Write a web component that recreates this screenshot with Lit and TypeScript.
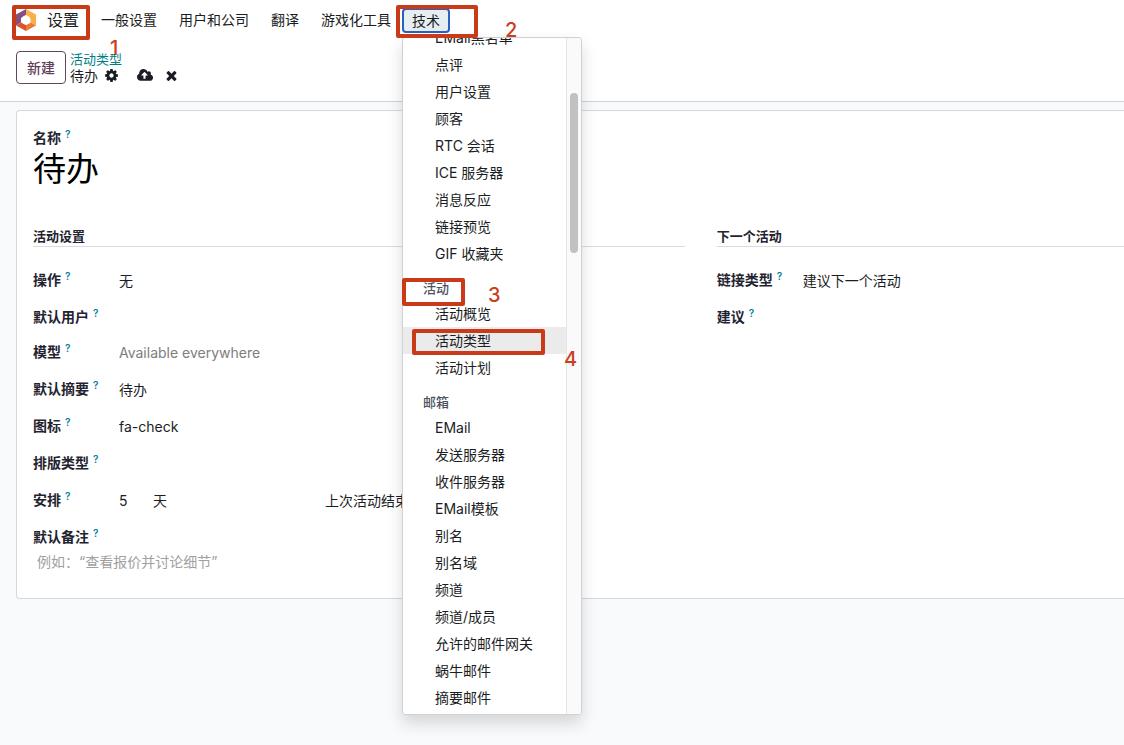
import { LitElement, html, css, svg, nothing } from "lit";
import { customElement, property } from "lit/decorators.js";

const NAV = ["一般设置", "用户和公司", "翻译", "游戏化工具"];

interface MenuGroup {
  title?: string;
  items: string[];
}

const MENU: MenuGroup[] = [
  {
    items: ["EMail黑名单", "点评", "用户设置", "顾客", "RTC 会话", "ICE 服务器", "消息反应", "链接预览", "GIF 收藏夹"],
  },
  { title: "活动", items: ["活动概览", "活动类型", "活动计划"] },
  {
    title: "邮箱",
    items: [
      "EMail", "发送服务器", "收件服务器", "EMail模板", "别名", "别名域", "频道",
      "频道/成员", "允许的邮件网关", "蜗牛邮件", "摘要邮件",
    ],
  },
];

const ICONS = {
  cog: {
    box: "0 0 1792 1792",
    d: "M1152 896q0-106-75-181t-181-75-181 75-75 181 75 181 181 75 181-75 75-181zm512-109v222q0 12-8 23t-20 13l-185 28q-19 54-39 91 35 50 107 138 10 12 10 25t-9 23q-27 37-99 108t-94 71q-12 0-26-9l-138-108q-44 23-91 38-16 136-29 186-7 28-36 28h-222q-14 0-24.5-8.5t-11.5-21.5l-28-184q-49-16-90-37l-141 107q-10 9-25 9-14 0-25-11-126-114-165-168-7-10-7-23 0-12 8-23 15-21 51-66.5t54-70.5q-27-50-41-99l-183-27q-13-2-21-12.5t-8-23.5v-222q0-12 8-23t19-13l186-28q14-46 39-92-40-57-107-138-10-12-10-24 0-10 9-23 26-36 98.5-107.5t94.5-71.5q13 0 26 10l138 107q44-23 91-38 16-136 29-186 7-28 36-28h222q14 0 24.5 8.5t11.5 21.5l28 184q49 16 90 37l142-107q9-9 24-9 13 0 25 10 129 119 165 170 7 8 7 22 0 12-8 23-15 21-51 66.5t-54 70.5q26 50 41 98l183 28q13 2 21 12.5t8 23.5z",
  },
  cloud: {
    box: "-64 0 1920 1792",
    d: "M1216 864q0-14-9-23l-352-352q-9-9-23-9t-23 9l-351 351q-10 12-10 24 0 14 9 23t23 9h224v352q0 13 9.5 22.5t22.5 9.5h192q13 0 22.5-9.5t9.5-22.5v-352h224q13 0 22.5-9.5t9.5-22.5zm640 288q0 159-112.5 271.5t-271.5 112.5h-1088q-185 0-316.5-131.5t-131.5-316.5q0-130 70-240t188-165q-2-30-2-43 0-212 150-362t362-150q156 0 285.5 87t188.5 231q71-62 166-62 106 0 181 75t75 181q0 76-41 138 130 31 213.5 135.5t83.5 238.5z",
  },
  times: {
    box: "0 0 1792 1792",
    d: "M1490 1322q0 40-28 68l-136 136q-28 28-68 28t-68-28l-294-294-294 294q-28 28-68 28t-68-28l-136-136q-28-28-28-68t28-68l294-294-294-294q-28-28-28-68t28-68l136-136q28-28 68-28t68 28l294 294 294-294q28-28 68-28t68 28l136 136q28 28 28 68t-28 68l-294 294 294 294q28 28 28 68z",
  },
};

const icon = (name: keyof typeof ICONS) => html`
  <svg class="icon" viewBox=${ICONS[name].box} aria-hidden="true">
    ${svg`<path d=${ICONS[name].d} fill="currentColor" />`}
  </svg>
`;

const base = css`
  *,
  *::before,
  *::after {
    box-sizing: border-box;
  }
  button,
  input,
  select,
  textarea {
    font: inherit;
    color: inherit;
    margin: 0;
    padding: 0;
    border: 0;
    border-radius: 0;
    background: none;
    appearance: none;
    outline: none;
  }
  a {
    color: inherit;
    text-decoration: none;
  }
`;

@customElement("apps-menu")
class AppsMenu extends LitElement {
  @property() current = "";

  static styles = [
    base,
    css`
      :host {
        display: flex;
        width: 180px;
        height: 678px;
        border: 1px solid #cfd2d5;
        border-radius: 3px;
        background: #fff;
        box-shadow: 0 8px 16px rgba(0, 0, 0, 0.15);
        overflow: hidden;
      }
      .list {
        flex: 1;
        display: flex;
        flex-direction: column;
        justify-content: flex-end;
        padding-bottom: 3px;
      }
      .title {
        flex: none;
        padding: 9px 20px 0;
        height: 33px;
        line-height: 24px;
        font-size: 13px;
        font-weight: 500;
        color: #4b5260;
      }
      .item {
        flex: none;
        padding: 0 32px;
        line-height: 27px;
        white-space: nowrap;
      }
      .current {
        background: #ebebeb;
      }
      .track {
        width: 15px;
        padding: 55px 3px 0;
        border-left: 1px solid #e6e6e6;
        background: #fafafa;
      }
      .thumb {
        height: 160px;
        border-radius: 4px;
        background: #c1c1c1;
      }
    `,
  ];

  render() {
    return html`
      <nav class="list" aria-label="技术">
        ${MENU.map(
          (g) => html`
            ${g.title ? html`<div class="title">${g.title}</div>` : nothing}
            ${g.items.map((i) => html`<a href="#" class="item ${i === this.current ? "current" : ""}">${i}</a>`)}
          `
        )}
      </nav>
      <div class="track"><div class="thumb"></div></div>
    `;
  }
}

@customElement("activity-form")
class ActivityForm extends LitElement {
  static styles = [
    base,
    css`
      :host {
        display: block;
      }
      .sheet {
        border: 1px solid #d5d9dc;
        border-right: 0;
        border-radius: 4px 0 0 4px;
        background: #fff;
        padding: 16px 0 25px 16px;
      }
      label {
        display: block;
        line-height: 21px;
        font-weight: 600;
        color: #1f2430;
        white-space: nowrap;
      }
      .help {
        margin-left: 4px;
        font-size: 10px;
        line-height: 10px;
        vertical-align: 5px;
        color: #017e9c;
      }
      .name {
        display: block;
        width: 100%;
        height: 42px;
        font-size: 33px;
        line-height: 42px;
        color: #000;
      }
      .groups {
        display: grid;
        grid-template-columns: 8fr 5fr;
        gap: 32px;
        margin-top: 36px;
      }
      h2 {
        margin: 0 0 14px;
        height: 21px;
        border-bottom: 1px solid #d9dcdf;
        font-size: 13px;
        line-height: 21px;
        font-weight: 600;
        color: #1f2430;
      }
      .row {
        display: grid;
        grid-template-columns: 86px 1fr;
        align-items: start;
        min-height: 37px;
        padding-top: 8px;
      }
      .compact {
        min-height: 35px;
      }
      .last {
        min-height: 32px;
      }
      .value {
        display: block;
        width: 100%;
        height: 23px;
        line-height: 23px;
      }
      .value::placeholder {
        color: #7d7d7d;
        opacity: 1;
      }
      .delay {
        display: grid;
        grid-template-columns: 34px 172px 1fr;
      }
      .note {
        display: block;
        width: 100%;
        height: 23px;
        padding-left: 4px;
        line-height: 23px;
        resize: none;
        overflow: hidden;
      }
      .note::placeholder {
        color: #a0a0a0;
        opacity: 1;
      }
    `,
  ];

  private label(id: string, text: string) {
    return html`<label for=${id}>${text}<sup class="help">?</sup></label>`;
  }

  render() {
    return html`
      <form class="sheet">
        ${this.label("name", "名称")}
        <input id="name" class="name" value="待办" />
        <div class="groups">
          <section>
            <h2>活动设置</h2>
            <div class="row">
              ${this.label("action", "操作")}
              <select id="action" class="value"><option>无</option></select>
            </div>
            <div class="row compact">${this.label("user", "默认用户")}<input id="user" class="value" /></div>
            <div class="row">
              ${this.label("model", "模型")}
              <input id="model" class="value" placeholder="Available everywhere" />
            </div>
            <div class="row">${this.label("summary", "默认摘要")}<input id="summary" class="value" value="待办" /></div>
            <div class="row">${this.label("icon", "图标")}<input id="icon" class="value" value="fa-check" /></div>
            <div class="row">${this.label("decoration", "排版类型")}<input id="decoration" class="value" /></div>
            <div class="row">
              ${this.label("delay", "安排")}
              <div class="delay">
                <input id="delay" class="value" value="5" />
                <select class="value" aria-label="单位"><option>天</option></select>
                <select class="value" aria-label="起点"><option>上次活动结束日期后</option></select>
              </div>
            </div>
            <div class="row last">${this.label("note", "默认备注")}</div>
            <textarea id="note" class="note" rows="1" placeholder="例如：“查看报价并讨论细节”"></textarea>
          </section>
          <section>
            <h2>下一个活动</h2>
            <div class="row">
              ${this.label("chaining", "链接类型")}
              <select id="chaining" class="value"><option>建议下一个活动</option></select>
            </div>
            <div class="row">${this.label("suggest", "建议")}<input id="suggest" class="value" /></div>
          </section>
        </div>
      </form>
    `;
  }
}

@customElement("app-root")
class AppRoot extends LitElement {
  static styles = [
    base,
    css`
      :host {
        display: block;
        position: relative;
        min-height: 100vh;
        background: #f8fafc;
        color: #1a1d24;
        font-family: Inter, "Noto Sans CJK SC", sans-serif;
        font-size: 14px;
        overflow: hidden;
      }
      .top {
        background: #fff;
        border-bottom: 1px solid #cfd4d9;
      }
      .navbar {
        display: flex;
        align-items: center;
        height: 40px;
        padding-left: 15px;
        white-space: nowrap;
      }
      .brand {
        display: flex;
        align-items: center;
        gap: 10px;
        margin-right: 11px;
        font-size: 16px;
        line-height: 24px;
      }
      .logo {
        width: 22px;
        height: 22px;
      }
      .entry {
        padding: 0 11px;
        line-height: 24px;
      }
      .holder {
        position: relative;
      }
      .open {
        display: block;
        height: 25px;
        padding: 0 8px;
        border: 2px solid #2a60c4;
        border-radius: 4px;
        background: #e6eef1;
        line-height: 21px;
      }
      .menu {
        position: absolute;
        top: 29px;
        left: 0;
        z-index: 2;
      }
      .panel {
        display: flex;
        align-items: center;
        gap: 4px;
        height: 61px;
        padding: 0 16px 7px;
      }
      .new {
        height: 33px;
        padding: 0 10px;
        border: 1px solid #5c4a5c;
        border-radius: 4px;
        font-weight: 500;
        color: #5f4058;
      }
      .crumbs {
        padding-top: 1px;
      }
      .parent {
        display: block;
        font-size: 13px;
        line-height: 16px;
        color: #017e84;
      }
      .here {
        display: flex;
        align-items: center;
        line-height: 18px;
      }
      .tool {
        display: flex;
        margin-left: 6px;
      }
      .save {
        margin-left: 18px;
      }
      .drop {
        margin-left: 11px;
      }
      .icon {
        height: 15px;
      }
      .content {
        padding: 8px 0 0 16px;
      }
      .mark {
        position: absolute;
        z-index: 3;
        border: 4px solid #c93a18;
        border-radius: 2px;
        pointer-events: none;
      }
      .num {
        position: absolute;
        z-index: 3;
        font-size: 20px;
        line-height: 24px;
        font-weight: 500;
        color: #cc3f1e;
      }
      .m1 { left: 12px; top: 5px; width: 78px; height: 35px; }
      .m2 { left: 396px; top: 5px; width: 82px; height: 33px; }
      .m3 { left: 402px; top: 278px; width: 63px; height: 28px; }
      .m4 { left: 412px; top: 329px; width: 133px; height: 26px; }
      .n1 { left: 110px; top: 36px; }
      .n2 { left: 505px; top: 18px; }
      .n3 { left: 488px; top: 283px; }
      .n4 { left: 564px; top: 347px; }
    `,
  ];

  render() {
    return html`
      <header class="top">
        <nav class="navbar">
          <a href="#" class="brand">
            <svg class="logo" viewBox="0 0 22 22" aria-hidden="true">
              <path d="M11 0L1 5.500V16.500L6 13.500V9L11 6Z" fill="#87507f" />
              <path d="M11 0L21 5.500V16.500L16 13.500L11 6Z" fill="#f9b04a" />
              <path d="M1 16.500L6 13.500L11 16L11 22Z" fill="#d9532c" />
              <path d="M11 22L21 16.500L16 13.500L11 16Z" fill="#ee7a35" />
              <circle cx="11" cy="11" r="4.500" fill="#fff" />
            </svg>
            设置
          </a>
          ${NAV.map((t) => html`<a href="#" class="entry">${t}</a>`)}
          <div class="holder">
            <button class="open" aria-expanded="true">技术</button>
            <apps-menu class="menu" current="活动类型"></apps-menu>
          </div>
        </nav>
        <div class="panel">
          <button class="new">新建</button>
          <div class="crumbs">
            <a href="#" class="parent">活动类型</a>
            <div class="here">
              待办
              <button class="tool" aria-label="操作">${icon("cog")}</button>
              <button class="tool save" aria-label="保存">${icon("cloud")}</button>
              <button class="tool drop" aria-label="放弃">${icon("times")}</button>
            </div>
          </div>
        </div>
      </header>
      <main class="content"><activity-form></activity-form></main>
      ${[1, 2, 3, 4].map((n) => html`<div class="mark m${n}"></div><span class="num n${n}">${n}</span>`)}
    `;
  }
}
